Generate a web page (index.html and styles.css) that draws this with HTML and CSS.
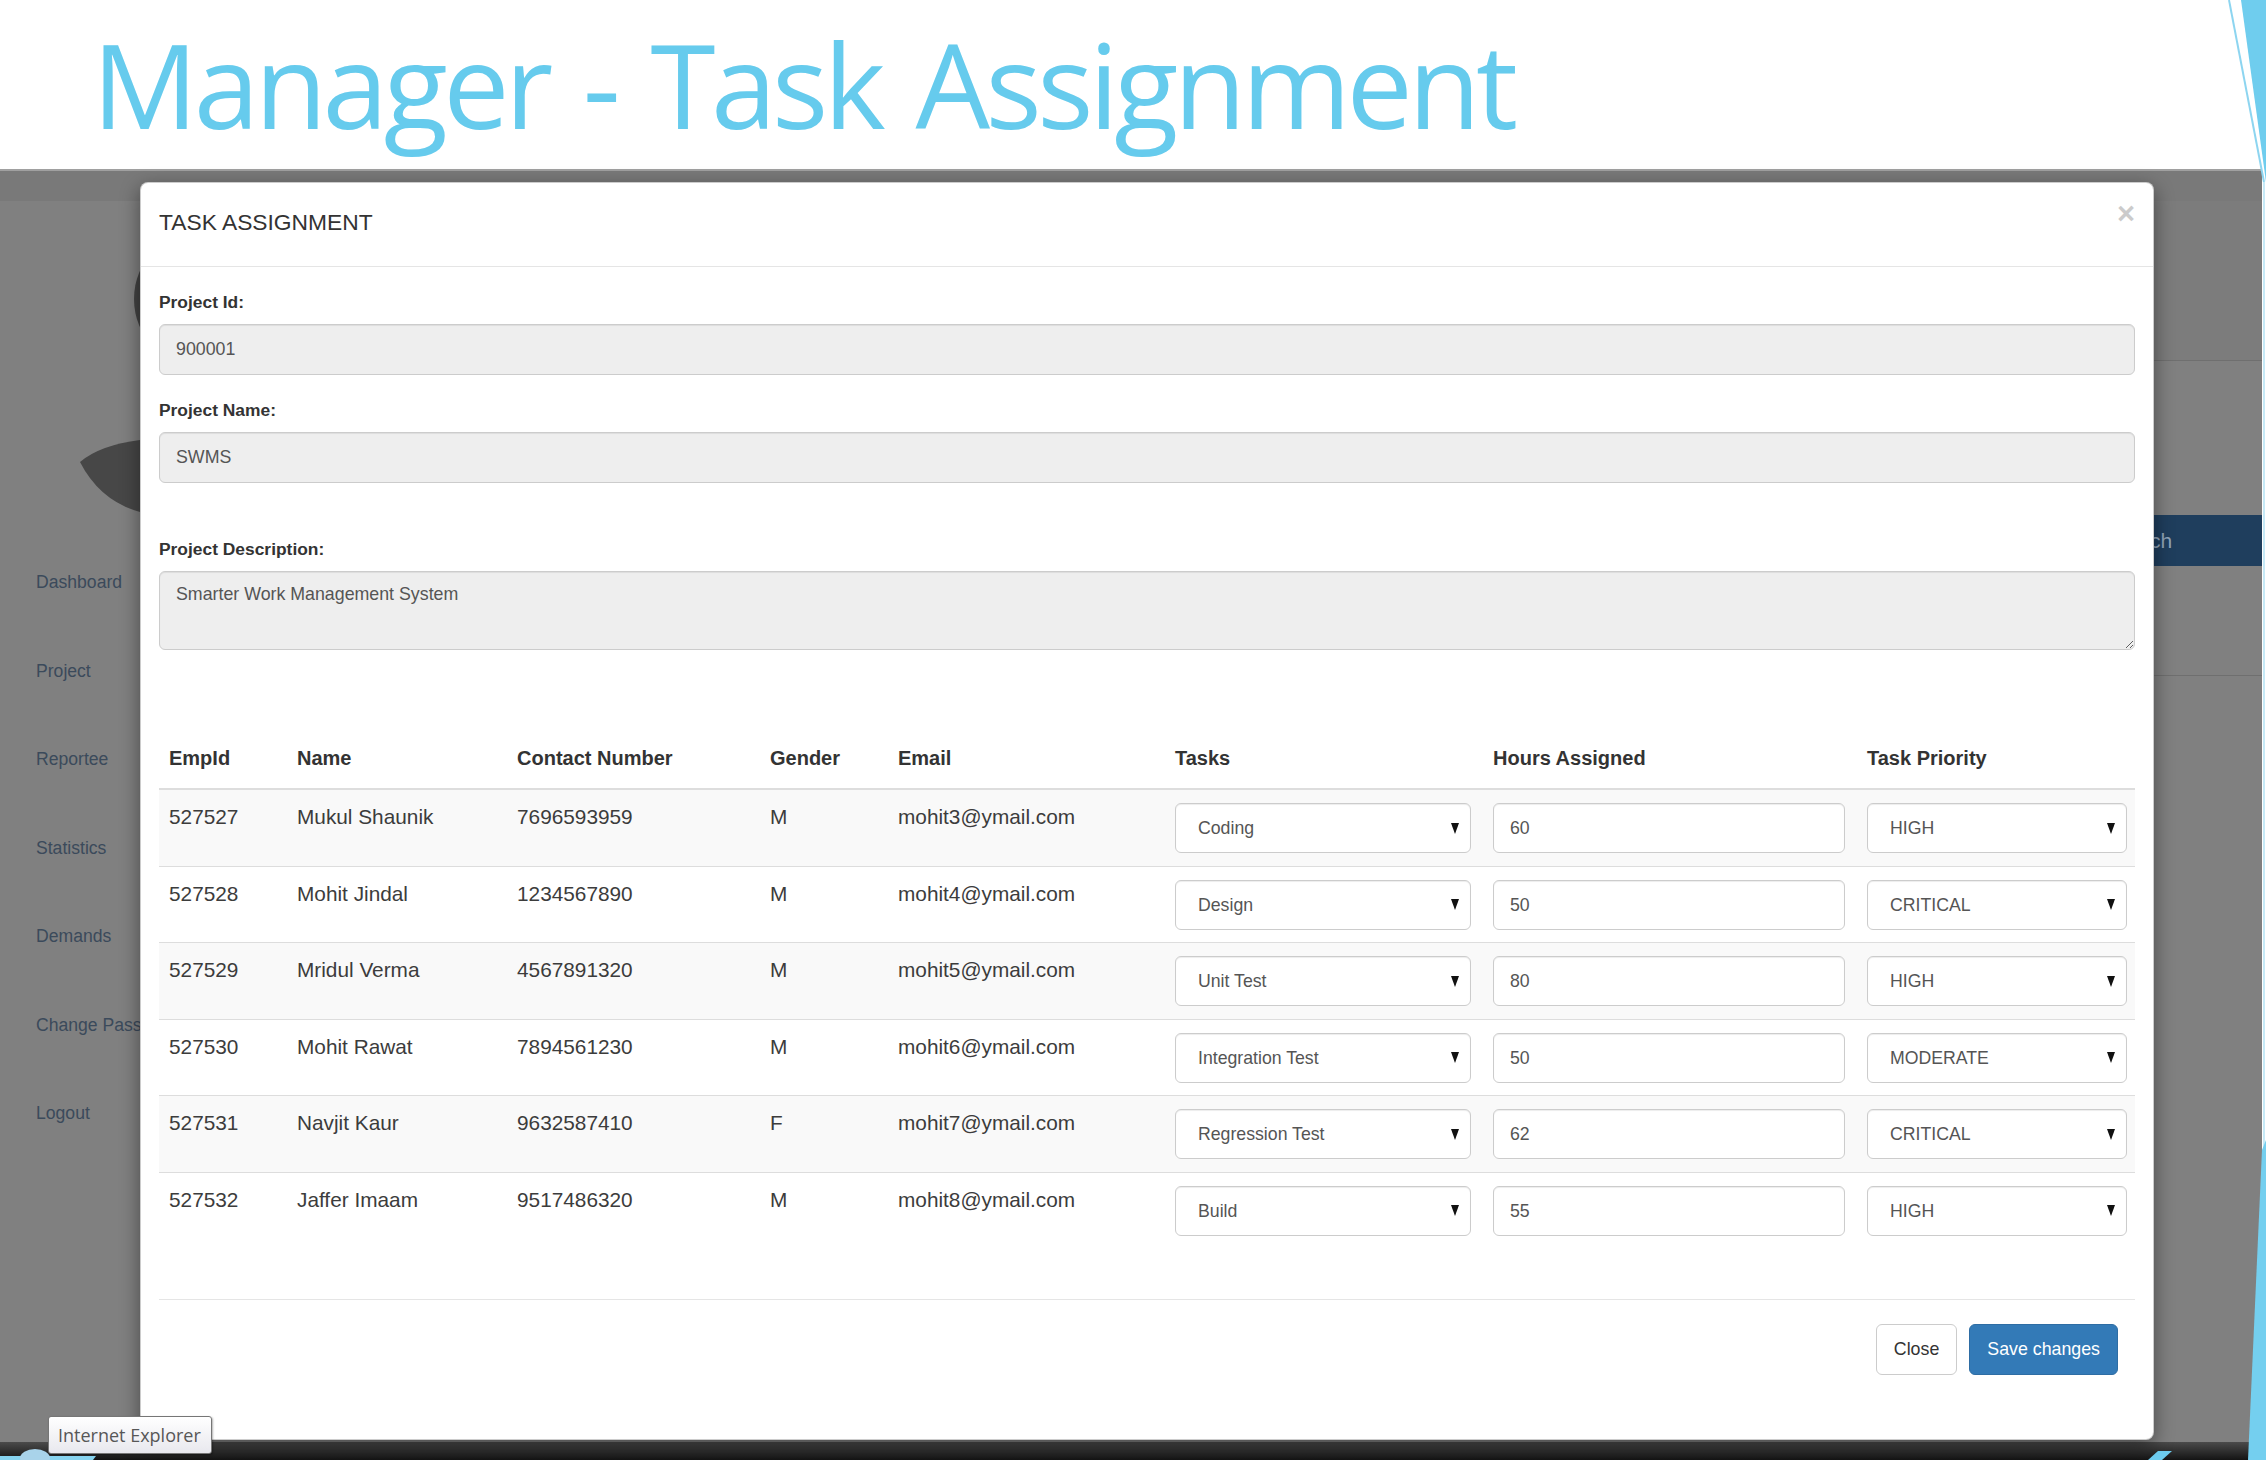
FILE: index.html
```html
<!DOCTYPE html>
<html lang="en">
<head>
<meta charset="utf-8">
<title>Manager - Task Assignment</title>
<link rel="stylesheet" href="styles.css">
</head>
<body>
<div class="slide">
  <header class="slide-header">
    <h1 class="slide-title">Manager - Task Assignment</h1>
  </header>

  <div class="shot">
    <div class="app">
      <div class="topbar"></div>
      <div class="app-body">
        <aside class="sidebar">
          <svg class="avatar" viewBox="0 0 300 337" width="300" height="337">
            <circle cx="204" cy="98" r="70" fill="#434343"/>
            <path d="M80 261 Q100 244 140 239 L140 311 Q100 300 80 261 Z" fill="#474747"/>
          </svg>
          <nav class="nav">
            <a class="nav-link">Dashboard</a>
            <a class="nav-link">Project</a>
            <a class="nav-link">Reportee</a>
            <a class="nav-link">Statistics</a>
            <a class="nav-link">Demands</a>
            <a class="nav-link">Change Password</a>
            <a class="nav-link">Logout</a>
          </nav>
        </aside>
        <main class="main">
          <div class="panel-a"></div>
          <div class="panel-b"></div>
          <div class="search-row"><span class="search-btn">Search</span></div>
          <div class="panel-c"></div>
        </main>
      </div>
    </div>
    <div class="taskbar"></div>

    <div class="modal">
      <div class="modal-header">
        <h4 class="modal-title">TASK ASSIGNMENT</h4>
        <span class="close">×</span>
      </div>
      <div class="modal-body">
        <div class="form-group">
          <label class="label">Project Id:</label>
          <input class="form-control" type="text" value="900001" readonly>
        </div>
        <div class="form-group gap">
          <label class="label">Project Name:</label>
          <input class="form-control" type="text" value="SWMS" readonly>
        </div>
        <div class="form-group last">
          <label class="label">Project Description:</label>
          <textarea class="form-control area" readonly>Smarter Work Management System</textarea>
        </div>

        <table class="table">
          <colgroup>
            <col class="c-id"><col class="c-name"><col class="c-contact"><col class="c-gender">
            <col class="c-email"><col class="c-task"><col class="c-hours"><col class="c-prio">
          </colgroup>
          <thead>
            <tr><th>EmpId</th><th>Name</th><th>Contact Number</th><th>Gender</th><th>Email</th><th>Tasks</th><th>Hours Assigned</th><th>Task Priority</th></tr>
          </thead>
          <tbody>
            <tr>
              <td>527527</td><td>Mukul Shaunik</td><td>7696593959</td><td>M</td><td>mohit3@ymail.com</td>
              <td><div class="sel sel-task"><span>Coding</span><i class="caret"></i></div></td>
              <td><div class="cell-input">60</div></td>
              <td><div class="sel sel-prio"><span>HIGH</span><i class="caret"></i></div></td>
            </tr>
            <tr>
              <td>527528</td><td>Mohit Jindal</td><td>1234567890</td><td>M</td><td>mohit4@ymail.com</td>
              <td><div class="sel sel-task"><span>Design</span><i class="caret"></i></div></td>
              <td><div class="cell-input">50</div></td>
              <td><div class="sel sel-prio"><span>CRITICAL</span><i class="caret"></i></div></td>
            </tr>
            <tr>
              <td>527529</td><td>Mridul Verma</td><td>4567891320</td><td>M</td><td>mohit5@ymail.com</td>
              <td><div class="sel sel-task"><span>Unit Test</span><i class="caret"></i></div></td>
              <td><div class="cell-input">80</div></td>
              <td><div class="sel sel-prio"><span>HIGH</span><i class="caret"></i></div></td>
            </tr>
            <tr>
              <td>527530</td><td>Mohit Rawat</td><td>7894561230</td><td>M</td><td>mohit6@ymail.com</td>
              <td><div class="sel sel-task"><span>Integration Test</span><i class="caret"></i></div></td>
              <td><div class="cell-input">50</div></td>
              <td><div class="sel sel-prio"><span>MODERATE</span><i class="caret"></i></div></td>
            </tr>
            <tr>
              <td>527531</td><td>Navjit Kaur</td><td>9632587410</td><td>F</td><td>mohit7@ymail.com</td>
              <td><div class="sel sel-task"><span>Regression Test</span><i class="caret"></i></div></td>
              <td><div class="cell-input">62</div></td>
              <td><div class="sel sel-prio"><span>CRITICAL</span><i class="caret"></i></div></td>
            </tr>
            <tr>
              <td>527532</td><td>Jaffer Imaam</td><td>9517486320</td><td>M</td><td>mohit8@ymail.com</td>
              <td><div class="sel sel-task"><span>Build</span><i class="caret"></i></div></td>
              <td><div class="cell-input">55</div></td>
              <td><div class="sel sel-prio"><span>HIGH</span><i class="caret"></i></div></td>
            </tr>
          </tbody>
        </table>
        <div class="divider"></div>
      </div>
      <div class="modal-footer">
        <button class="btn">Close</button>
        <button class="btn btn-primary">Save changes</button>
      </div>
    </div>

    <div class="tooltip">Internet Explorer</div>
  </div>

  <svg class="decor" viewBox="0 0 2266 1460" width="2266" height="1460">
    <polygon points="2241,0 2266,0 2266,182" fill="#6fcdee"/>
    <line x1="2229" y1="0" x2="2264" y2="182" stroke="#8dd5f0" stroke-width="2"/>
    <line x1="2264" y1="182" x2="2264" y2="1150" stroke="#b5e3f4" stroke-width="1.5"/>
    <polygon points="2262,1150 2266,1140 2266,1460 2248,1460" fill="#74cfef"/>
    <polygon points="0,1456 96,1456 93,1460 0,1460" fill="#86d3ef"/>
    <polygon points="2148,1460 2158,1451 2172,1451 2162,1460" fill="#6ccbee"/>
    <ellipse cx="35" cy="1458" rx="15" ry="9" fill="#a9d3ea"/>
  </svg>
</div>
</body>
</html>
```

FILE: styles.css
```css
* { box-sizing: border-box; }

html, body { margin: 0; padding: 0; }

body {
  width: 2266px;
  height: 1460px;
  overflow: hidden;
  background: #fff;
  font-family: "Liberation Sans", Arial, sans-serif;
  color: #333;
}

.slide {
  position: relative;
  width: 2266px;
  height: 1460px;
}

/* ---------- slide title ---------- */
.slide-header {
  height: 169px;
  padding: 25px 0 0 92px;
}

.slide-title {
  margin: 0;
  font-family: "Open Sans", sans-serif;
  font-weight: 400;
  font-size: 118px;
  line-height: 118px;
  letter-spacing: -4.5px;
  word-spacing: 8px;
  color: #66cbed;
  white-space: nowrap;
}

/* ---------- screenshot of the app ---------- */
.shot {
  position: relative;
  width: 2262px;
  height: 1291px;
}

.app {
  height: 1273px;
  display: flex;
  flex-direction: column;
  background: #808080;
  border-top: 2px solid #a0a0a0;
}

.topbar {
  flex: none;
  height: 30px;
  background: #797979;
}

.app-body {
  flex: 1;
  display: flex;
}

.sidebar {
  flex: none;
  width: 300px;
}

.avatar { display: block; }

.nav {
  display: flex;
  flex-direction: column;
}

.nav-link {
  height: 88.5px;
  line-height: 88.5px;
  padding-left: 36px;
  font-size: 17.6px;
  color: #3b4a5b;
  white-space: nowrap;
}

.main {
  flex: 1;
  display: flex;
  flex-direction: column;
}

.panel-a {
  height: 160px;
  background: #7c7c7c;
  border-bottom: 1px solid #6f6f6f;
}

.panel-b { height: 154px; }

.search-row {
  height: 51px;
  display: flex;
  justify-content: flex-end;
}

.search-btn {
  width: 246px;
  background: #1f3e5d;
  color: #8fa3b8;
  font-size: 21px;
  line-height: 51px;
  text-align: center;
}

.panel-c {
  height: 110px;
  border-bottom: 1px solid #6f6f6f;
}

.taskbar {
  height: 18px;
  background: linear-gradient(#4b4b4b, #2a2a2a 60%, #141414);
}

/* ---------- modal ---------- */
.modal {
  position: absolute;
  top: 13px;
  left: 140px;
  width: 2014px;
  background: #fff;
  border: 1px solid rgba(0, 0, 0, 0.2);
  border-radius: 8px;
  box-shadow: 0 6px 20px rgba(0, 0, 0, 0.45);
}

.modal-header {
  height: 84px;
  padding: 0 18px 5px;
  display: flex;
  align-items: center;
  justify-content: space-between;
  border-bottom: 1px solid #e5e5e5;
}

.modal-title {
  margin: 0;
  font-size: 22.8px;
  font-weight: 400;
  line-height: 30px;
  color: #333;
}

.close {
  align-self: flex-start;
  margin-top: 15px;
  font-size: 31px;
  font-weight: 700;
  line-height: 1;
  color: #000;
  opacity: 0.2;
}

.modal-body {
  padding: 23px 18px 0;
}

.form-group { margin-bottom: 23px; }
.form-group.gap { margin-bottom: 54px; }
.form-group.last { margin-bottom: 0; }

.label {
  display: block;
  margin-bottom: 9px;
  font-size: 17.4px;
  font-weight: 700;
  line-height: 25px;
  color: #333;
}

.form-control {
  display: block;
  width: 100%;
  height: 51px;
  margin: 0;
  padding: 0 16px;
  font-family: "Liberation Sans", Arial, sans-serif;
  font-size: 17.8px;
  color: #555;
  background: #eee;
  border: 1px solid #ccc;
  border-radius: 6px;
  box-shadow: inset 0 1px 1px rgba(0, 0, 0, 0.075);
  outline: none;
}

.form-control.area {
  height: 79px;
  padding: 10px 16px;
  line-height: 25px;
  resize: vertical;
}

/* ---------- table ---------- */
.table {
  width: 100%;
  margin-top: 84px;
  border-collapse: collapse;
  table-layout: fixed;
}

.c-id { width: 128px; }
.c-name { width: 220px; }
.c-contact { width: 253px; }
.c-gender { width: 128px; }
.c-email { width: 277px; }
.c-task { width: 318px; }
.c-hours { width: 374px; }
.c-prio { width: 278px; }

.table th {
  padding: 9px 10px 15px;
  font-size: 20px;
  font-weight: 700;
  line-height: 30px;
  text-align: left;
  vertical-align: bottom;
  color: #333;
  border-bottom: 2px solid #ddd;
  white-space: nowrap;
}

.table td {
  padding: 13px 10px 12.5px;
  font-size: 20.8px;
  line-height: 28px;
  vertical-align: top;
  color: #3c3c3c;
  border-top: 1px solid #ddd;
  white-space: nowrap;
}

.table tbody tr:nth-child(odd) td { background: #f9f9f9; }

.sel {
  display: flex;
  align-items: center;
  justify-content: space-between;
  height: 50px;
  padding: 0 11px 0 22px;
  font-size: 17.7px;
  color: #555;
  background: #fff;
  border: 1px solid #ccc;
  border-radius: 6px;
  box-shadow: inset 0 1px 1px rgba(0, 0, 0, 0.075);
}

.sel-task { width: 296px; }
.sel-prio { width: 260px; }

.caret {
  display: block;
  width: 0;
  height: 0;
  border-left: 4px solid transparent;
  border-right: 4px solid transparent;
  border-top: 11px solid #111;
}

.cell-input {
  width: 352px;
  height: 50px;
  padding: 0 16px;
  font-size: 17.7px;
  line-height: 48px;
  color: #555;
  background: #fff;
  border: 1px solid #ccc;
  border-radius: 6px;
  box-shadow: inset 0 1px 1px rgba(0, 0, 0, 0.075);
}

.divider {
  height: 1px;
  margin-top: 51px;
  background: #e5e5e5;
}

.modal-footer {
  display: flex;
  justify-content: flex-end;
  gap: 12px;
  padding: 24px 35px 64px;
}

.btn {
  height: 51px;
  margin: 0;
  padding: 0 17px;
  font-family: "Liberation Sans", Arial, sans-serif;
  font-size: 17.8px;
  color: #333;
  background: #fff;
  border: 1px solid #ccc;
  border-radius: 6px;
}

.btn-primary {
  color: #fff;
  background: #337ab7;
  border-color: #2e6da4;
}

/* ---------- tooltip ---------- */
.tooltip {
  position: absolute;
  left: 48px;
  top: 1247px;
  width: 164px;
  height: 38px;
  padding-left: 9px;
  font-family: "Open Sans", sans-serif;
  font-size: 18px;
  line-height: 36px;
  color: #575757;
  background: linear-gradient(#ffffff, #e8e8ee);
  border: 1px solid #767676;
  border-radius: 3px;
  box-shadow: 1px 1px 2px rgba(0, 0, 0, 0.3);
  white-space: nowrap;
}

/* ---------- slide decoration ---------- */
.decor {
  position: absolute;
  top: 0;
  left: 0;
  pointer-events: none;
}
```
